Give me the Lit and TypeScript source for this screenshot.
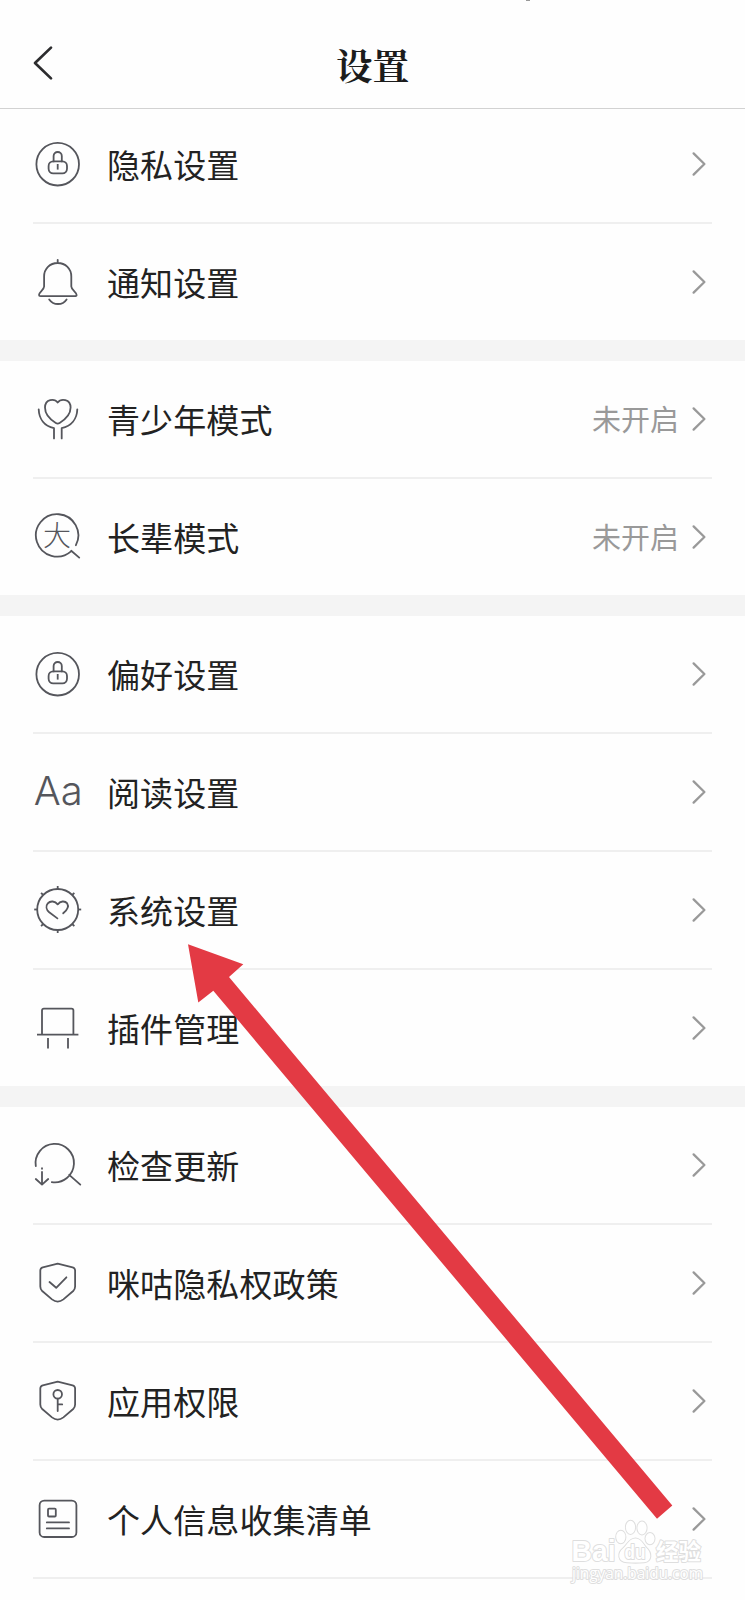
import { LitElement, html, svg, css, type TemplateResult } from "lit";
import { customElement, property } from "lit/decorators.js";

const lock = svg`
  <circle cx="24.7" cy="25.2" r="21.3"/>
  <rect x="15.6" y="22.4" width="18.400" height="12" rx="4.6"/>
  <path d="M20.6 22.4v-5.3a4.1 4.1 0 0 1 8.2 0v5.3"/>
  <path class="flat" d="M24.7 25v5.6"/>`;
const shield = svg`<path d="M24.7 5.7 39.6 9.3Q42.1 10 42.1 12.6V28.6Q42.1 31.2 40.2 33L30.4 41.4Q24.7 45.8 19 41.4L9.2 33Q7.3 31.2 7.3 28.6V12.6Q7.3 10 9.8 9.3Z"/>`;

const ticks = [0, 45, 90, 135, 180, 225, 270, 315];

const ICONS: Record<string, unknown> = {
  lock,
  bell: svg`
    <path d="M24.7 2.8V6M24.7 6C16.8 6 11.1 11.8 11.1 19.4V29.6C11.1 32.6 6 35 6 38Q6 39.2 7.6 39.2H41.8Q43.6 39.2 43.6 38C43.6 35 38.3 32.6 38.3 29.6V19.4C38.3 11.8 32.6 6 24.7 6ZM16.2 42.4Q19.4 47 25 47T33.6 42.4"/>`,
  youth: svg`
    <path d="M24.7 8.6C21.6 4.2 12 4.6 12 13.6C12 21.5 18.5 26.4 22.8 29Q24.7 30.1 26.6 29C30.9 26.4 37.6 21.5 37.6 13.6C37.6 4.6 27.8 4.2 24.7 8.6Z"/>
    <path d="M5.7 15.3C6 25 11.5 32 21 34.2V44.4M44.3 15.3C44 25 38.2 32 28.7 34.2V44.4"/>`,
  elder: svg`
    <path d="M42.9 33.2A21.2 21.2 0 1 0 38 39.4M38.2 38.8 46.2 45.6"/>
    <text class="big" x="24" y="33.6" text-anchor="middle">大</text>`,
  font: svg`<text class="aa" x="0.8" y="38" textLength="49" lengthAdjust="spacingAndGlyphs">Aa</text>`,
  system: svg`
    <circle cx="24.7" cy="24.5" r="20.5"/>
    ${ticks.map((a) => svg`<path class="flat" d="M24.7 1v3" transform="rotate(${a} 24.7 24.500)"/>`)}
    <path d="M24.4 33.4 16.2 27.2C13.2 24.6 12.6 21 14.8 18.4C17.2 15.6 22 15.8 24.7 19.4C27.2 15.8 32 15.6 34.2 18.4C36 21.2 34.8 24.4 30.2 28.3"/>`,
  plugin: svg`
    <path class="flat" d="M9 31.7V7.6Q9 5.7 10.9 5.7H38.500Q40.4 5.7 40.4 7.6V31.7M4 31.7H45.4M15 35V45.6M35 35V45.6"/>`,
  update: svg`
    <path d="M2.8 26.2A19.2 19.2 0 1 1 18.8 42.1M36.2 34.8 47.3 44.6"/>
    <path d="M9 32V44.4M2.8 39 9 44.6 15.2 39"/>
    <path class="flat" d="M9 27.4v2"/>`,
  check: svg`${shield}<path d="M16.5 24 23.2 29.8 33.4 19.3"/>`,
  key: svg`${shield}<circle cx="24.7" cy="18.3" r="4.3"/><path d="M24.7 22.6V35M24.7 28.4H29.2"/>`,
  list: svg`
    <rect x="6.6" y="6.6" width="36.8" height="36.4" rx="4.6"/>
    <rect x="15" y="14.7" width="7.8" height="7.8" rx="1"/>
    <path d="M13.8 28.4H36M13.8 34.4H36"/>`,
};

interface Item {
  icon: string;
  label: string;
  value?: string;
}

const GROUPS: Item[][] = [
  [
    { icon: "lock", label: "隐私设置" },
    { icon: "bell", label: "通知设置" },
  ],
  [
    { icon: "youth", label: "青少年模式", value: "未开启" },
    { icon: "elder", label: "长辈模式", value: "未开启" },
  ],
  [
    { icon: "lock", label: "偏好设置" },
    { icon: "font", label: "阅读设置" },
    { icon: "system", label: "系统设置" },
    { icon: "plugin", label: "插件管理" },
  ],
  [
    { icon: "update", label: "检查更新" },
    { icon: "check", label: "咪咕隐私权政策" },
    { icon: "key", label: "应用权限" },
    { icon: "list", label: "个人信息收集清单" },
  ],
];

@customElement("setting-row")
export class SettingRow extends LitElement {
  @property({ attribute: false }) item!: Item;

  static styles = css`
    :host {
      display: flex;
      align-items: center;
      height: 116px;
    }
    .icon {
      width: 50px;
      height: 50px;
      flex: none;
      fill: none;
      stroke: #55565c;
      stroke-width: 1.8;
      stroke-linecap: round;
      stroke-linejoin: round;
    }
    .flat {
      stroke-linecap: butt;
    }
    .big,
    .aa {
      fill: #55565c;
      stroke: none;
    }
    .big {
      font: 300 28px "Noto Sans CJK SC", sans-serif;
    }
    .aa {
      font: 300 40px Inter, sans-serif;
    }
    .label {
      flex: 1;
      margin-left: 24px;
      font-size: 33px;
      letter-spacing: 0.12px;
      color: #222;
      white-space: nowrap;
    }
    .value {
      margin-right: 12px;
      padding-bottom: 2px;
      font-size: 29px;
      color: #999;
    }
    .chevron {
      width: 16px;
      height: 26px;
      margin-right: 5px;
      padding-bottom: 1px;
      fill: none;
      stroke: #999;
      stroke-width: 2.3;
      stroke-linecap: round;
      stroke-linejoin: round;
    }
  `;

  render(): TemplateResult {
    const { icon, label, value } = this.item;
    return html`
      <svg class="icon" viewBox="0 0 50 50">${ICONS[icon]}</svg>
      <span class="label">${label}</span>
      ${value ? html`<span class="value">${value}</span>` : null}
      <svg class="chevron" viewBox="0 0 16 26"><path d="M2.6 2.4 13.4 13 2.6 23.6" /></svg>
    `;
  }
}

@customElement("app-root")
export class AppRoot extends LitElement {
  static styles = css`
    :host {
      display: block;
      position: relative;
      height: 1600px;
      overflow: hidden;
      background: #fefefe;
      font-family: "Noto Sans CJK SC", sans-serif;
    }
    .header {
      position: relative;
      z-index: 1;
      box-sizing: border-box;
      height: 109px;
      padding: 20px 32px 0;
      display: grid;
      grid-template-columns: 40px 1fr 40px;
      align-items: center;
      border-bottom: 1px solid #d2d2d2;
      background: #fefefe;
    }
    .back {
      width: 22px;
      height: 36px;
      margin-bottom: 2px;
      fill: none;
      stroke: #2c2c2e;
      stroke-width: 2.7;
      stroke-linecap: round;
      stroke-linejoin: round;
    }
    .title {
      margin: 0;
      text-align: center;
      font: 700 36.5px/50px "Noto Serif CJK SC", "Source Han Serif SC", "Noto Serif SC", "Noto Sans CJK SC", serif;
      color: #1c1c1c;
    }
    .speck {
      position: absolute;
      left: 526px;
      top: 0;
      width: 4px;
      height: 1px;
      background: #999;
    }
    .groups {
      display: flex;
      flex-direction: column;
      gap: 21px;
      margin-top: -3px;
      background: #f4f4f4;
    }
    .group {
      padding: 0 33px;
      background: #fefefe;
    }
    .group:last-child {
      padding-bottom: 60px;
    }
    .row + .row {
      border-top: 2px solid #efefef;
    }
    .group:last-child .row:last-child {
      border-bottom: 2px solid #efefef;
    }
    .overlay {
      position: absolute;
      inset: 0;
      width: 745px;
      height: 1600px;
      pointer-events: none;
    }
    .arrow {
      fill: #e33a44;
    }
    .mark {
      fill: #fff;
      stroke: #dedede;
      stroke-width: 2;
      stroke-linejoin: round;
      paint-order: stroke;
    }
    .brand {
      font: 700 30px "Liberation Sans", sans-serif;
    }
    .du {
      font: 700 20px "Liberation Sans", sans-serif;
    }
    .cn {
      font: 700 22.5px "Noto Sans CJK SC", sans-serif;
    }
    .url {
      font: 400 16px "Open Sans", sans-serif;
    }
  `;

  render(): TemplateResult {
    return html`
      <header class="header">
        <svg class="back" viewBox="0 0 22 36"><path d="M19 2.6 3 18 19 33.4" /></svg>
        <h1 class="title">设置</h1>
        <span class="speck"></span>
      </header>
      <main class="groups">
        ${GROUPS.map(
          (items) => html`
            <section class="group">
              ${items.map((item) => html`<div class="row"><setting-row .item=${item}></setting-row></div>`)}
            </section>
          `
        )}
      </main>
      <svg class="overlay" viewBox="0 0 745 1600">
        <g class="mark">
          <text class="brand" x="571.5" y="1561" textLength="44" lengthAdjust="spacingAndGlyphs">Bai</text>
          <ellipse cx="620.8" cy="1537" rx="4.6" ry="6.2" />
          <ellipse cx="630.5" cy="1527.3" rx="4.6" ry="6.6" />
          <ellipse cx="642" cy="1528" rx="4.6" ry="6.4" />
          <ellipse cx="650" cy="1538.6" rx="4.5" ry="5.600" />
          <path d="M635.5 1538.5C641 1538.5 643 1544 646.5 1548C651.5 1552.5 652.5 1561.5 644 1562.3C639 1562.7 632 1562.7 627 1562.3C617.5 1561.5 617.5 1553 623 1548.5C627.5 1544.5 629.5 1538.5 635.5 1538.5Z" />
          <text class="du" x="624.5" y="1558.5" textLength="21" lengthAdjust="spacingAndGlyphs">du</text>
          <text class="cn" x="656" y="1560">经验</text>
          <text class="url" x="572" y="1579" textLength="131" lengthAdjust="spacingAndGlyphs">jingyan.baidu.com</text>
        </g>
        <path class="arrow" d="M188 944.2 243.3 964.3 229 977 672.3 1505.5 657 1518.8 213.3 990.7 198.3 1002.5Z" />
      </svg>
    `;
  }
}
